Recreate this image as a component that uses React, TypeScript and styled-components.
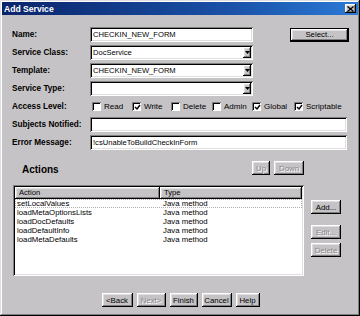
import styled, { createGlobalStyle } from "styled-components";

const GlobalStyle = createGlobalStyle`
  html, body { margin: 0; padding: 0; background: #c6c3c6; }
  body { font-family: "Liberation Sans", Arial, sans-serif; font-size: 8px; color: #000; }
  * { box-sizing: border-box; }
`;

const raised = `
  box-shadow: inset -1px -1px #000, inset 1px 1px #fff, inset -2px -2px #808080, inset 2px 2px #dfdfdf;
`;

const sunken = `
  box-shadow: inset 1px 1px #808080, inset -1px -1px #fff, inset 2px 2px #000, inset -2px -2px #dfdfdf;
`;

const actions = [
  "setLocalValues",
  "loadMetaOptionsLists",
  "loadDocDefaults",
  "loadDefaultInfo",
  "loadMetaDefaults",
];

const access = [
  { label: "Read", checked: false, width: 40 },
  { label: "Write", checked: true, width: 39 },
  { label: "Delete", checked: false, width: 41 },
  { label: "Admin", checked: false, width: 40 },
  { label: "Global", checked: true, width: 42 },
  { label: "Scriptable", checked: true, width: 50 },
];

function CheckMark() {
  return (
    <svg width="7" height="7" viewBox="0 0 7 7">
      <path d="M1 3 L3 5 L6 1" stroke="#000" strokeWidth="1.4" fill="none" />
    </svg>
  );
}

function Arrow() {
  return (
    <svg width="5" height="3" viewBox="0 0 5 3">
      <path d="M0 0 H5 L2.5 3 Z" fill="#000" />
    </svg>
  );
}

export default function App() {
  return (
    <>
      <GlobalStyle />
      <St.Window>
        <St.TitleBar>
          <St.Title>Add Service</St.Title>
          <St.Close>
            <svg width="7" height="6" viewBox="0 0 7 6">
              <path d="M0.5 0.5 L6.5 5.5 M6.5 0.5 L0.5 5.5" stroke="#000" strokeWidth="1.3" />
            </svg>
          </St.Close>
        </St.TitleBar>

        <St.Body>
          <St.Form>
            <St.Row>
              <St.Label>Name:</St.Label>
              <St.TextBox $width={163}>CHECKIN_NEW_FORM</St.TextBox>
              <St.Button $width={59} $default>Select...</St.Button>
            </St.Row>
            <St.Row>
              <St.Label>Service Class:</St.Label>
              <St.Combo>
                <St.ComboText>DocService</St.ComboText>
                <St.DropButton><Arrow /></St.DropButton>
              </St.Combo>
            </St.Row>
            <St.Row>
              <St.Label>Template:</St.Label>
              <St.Combo>
                <St.ComboText>CHECKIN_NEW_FORM</St.ComboText>
                <St.DropButton><Arrow /></St.DropButton>
              </St.Combo>
            </St.Row>
            <St.Row>
              <St.Label>Service Type:</St.Label>
              <St.Combo>
                <St.ComboText />
                <St.DropButton><Arrow /></St.DropButton>
              </St.Combo>
            </St.Row>
            <St.Row>
              <St.Label>Access Level:</St.Label>
              <St.Checks>
                {access.map((a) => (
                  <St.CheckItem key={a.label} $width={a.width}>
                    <St.Box>{a.checked && <CheckMark />}</St.Box>
                    {a.label}
                  </St.CheckItem>
                ))}
              </St.Checks>
            </St.Row>
            <St.Row>
              <St.Label>Subjects Notified:</St.Label>
              <St.TextBox $width={257} />
            </St.Row>
            <St.Row>
              <St.Label>Error Message:</St.Label>
              <St.TextBox $width={257}>!csUnableToBuildCheckInForm</St.TextBox>
            </St.Row>
          </St.Form>

          <St.ActionsBar>
            <St.Heading>Actions</St.Heading>
            <St.Button $width={18} disabled>Up</St.Button>
            <St.Button $width={30} disabled>Down</St.Button>
          </St.ActionsBar>

          <St.ListArea>
            <St.List>
              <St.HeaderRow>
                <St.HeaderCell $width={145}>Action</St.HeaderCell>
                <St.HeaderCell>Type</St.HeaderCell>
              </St.HeaderRow>
              {actions.map((name, i) => (
                <St.ListRow key={name} $focused={i === 0}>
                  <St.NameCell>{name}</St.NameCell>
                  <St.TypeCell>Java method</St.TypeCell>
                </St.ListRow>
              ))}
            </St.List>
            <St.SideButtons>
              <St.Button $width={30}>Add...</St.Button>
              <St.Button $width={30} disabled style={{ marginTop: 11 }}>Edit...</St.Button>
              <St.Button $width={30} disabled style={{ marginTop: 4 }}>Delete</St.Button>
            </St.SideButtons>
          </St.ListArea>

          <St.Footer>
            <St.Button $width={31}>&lt;Back</St.Button>
            <St.Button $width={29} disabled>Next&gt;</St.Button>
            <St.Button $width={28}>Finish</St.Button>
            <St.Button $width={30}>Cancel</St.Button>
            <St.Button $width={24}>Help</St.Button>
          </St.Footer>
        </St.Body>
      </St.Window>
    </>
  );
}

const St = {
  Window: styled.div`
    width: 360px;
    height: 316px;
    padding: 2px;
    background: #c6c3c6;
    box-shadow: inset -1px -1px #000, inset 1px 1px #dfdfdf, inset -2px -2px #808080, inset 2px 2px #fff;
    display: flex;
    flex-direction: column;
  `,
  TitleBar: styled.div`
    height: 13px;
    display: flex;
    align-items: center;
    justify-content: space-between;
    padding: 0 2px 0 2px;
    background: linear-gradient(90deg, #0a246a 0%, #1a52a8 65%, #2a7ad6 100%);
  `,
  Title: styled.span`
    color: #fff;
    font-weight: bold;
    font-size: 8.6px;
  `,
  Close: styled.div`
    width: 11px;
    height: 9px;
    background: #c6c3c6;
    ${raised}
    display: flex;
    align-items: center;
    justify-content: center;
  `,
  Body: styled.div`
    display: flex;
    flex-direction: column;
    padding: 12px 9px 0 10px;
  `,
  Form: styled.div`
    display: flex;
    flex-direction: column;
    gap: 3px;
  `,
  Row: styled.div`
    display: flex;
    align-items: center;
    height: 15px;
  `,
  Label: styled.span`
    width: 78px;
    flex: none;
    font-weight: bold;
    font-size: 8.2px;
  `,
  TextBox: styled.div<{ $width: number }>`
    width: ${(p) => p.$width}px;
    height: 15px;
    background: #fff;
    ${sunken}
    padding: 0 3px;
    line-height: 15px;
    font-size: 7.6px;
    white-space: nowrap;
    overflow: hidden;
  `,
  Combo: styled.div`
    width: 163px;
    height: 15px;
    display: flex;
    ${sunken}
    padding: 2px;
    background: #fff;
  `,
  ComboText: styled.div`
    flex: 1;
    padding-left: 1px;
    line-height: 11px;
    font-size: 7.6px;
    white-space: nowrap;
  `,
  DropButton: styled.div`
    width: 8px;
    background: #c6c3c6;
    ${raised}
    display: flex;
    align-items: center;
    justify-content: center;
  `,
  Button: styled.button<{ $width: number; $default?: boolean }>`
    width: ${(p) => p.$width}px;
    height: 14px;
    padding: 0;
    margin: 0;
    font-family: "Liberation Sans", Arial, sans-serif;
    font-size: 7.8px;
    color: #000;
    background: #c6c3c6;
    border: ${(p) => (p.$default ? "1px solid #000" : "none")};
    ${raised}
    flex: none;
    &:disabled {
      color: #8a878a;
      text-shadow: 1px 1px #fff;
    }
    ${(p) => (p.$default ? "margin-left: auto;" : "")}
  `,
  Checks: styled.div`
    display: flex;
    align-items: center;
    padding-left: 2px;
  `,
  CheckItem: styled.label<{ $width: number }>`
    width: ${(p) => p.$width}px;
    display: flex;
    align-items: center;
    gap: 3px;
    font-size: 8px;
    white-space: nowrap;
  `,
  Box: styled.span`
    width: 9px;
    height: 9px;
    background: #fff;
    box-shadow: inset 1px 1px #808080, inset -1px -1px #fff, inset 2px 2px #000;
    display: flex;
    align-items: center;
    justify-content: center;
    padding: 1px 0 0 1px;
  `,
  ActionsBar: styled.div`
    display: flex;
    align-items: flex-end;
    gap: 4px;
    height: 14px;
    margin-top: 11px;
    width: 292px;
  `,
  Heading: styled.span`
    padding-left: 10px;
    margin-right: auto;
    font-weight: bold;
    font-size: 10px;
    line-height: 11px;
  `,
  ListArea: styled.div`
    display: flex;
    gap: 7px;
    margin-top: 10px;
    padding-left: 1px;
  `,
  List: styled.div`
    width: 291px;
    height: 91px;
    background: #fff;
    ${sunken}
    padding: 2px;
    display: flex;
    flex-direction: column;
  `,
  HeaderRow: styled.div`
    display: flex;
    height: 12px;
    flex: none;
  `,
  HeaderCell: styled.div<{ $width?: number }>`
    ${(p) => (p.$width ? `width: ${p.$width}px;` : "flex: 1;")}
    background: #c6c3c6;
    ${raised}
    padding-left: 4px;
    line-height: 12px;
    font-size: 7.6px;
  `,
  ListRow: styled.div<{ $focused?: boolean }>`
    display: flex;
    height: 9px;
    flex: none;
    line-height: 9px;
    font-size: 7.8px;
    ${(p) => (p.$focused ? "outline: 1px dotted #b0b0b0; outline-offset: -1px;" : "")}
  `,
  NameCell: styled.div`
    width: 145px;
    padding-left: 2px;
  `,
  TypeCell: styled.div`
    flex: 1;
    padding-left: 3px;
  `,
  SideButtons: styled.div`
    display: flex;
    flex-direction: column;
    margin-top: 15px;
  `,
  Footer: styled.div`
    display: flex;
    justify-content: center;
    gap: 4px;
    margin-top: 17px;
  `,
};
